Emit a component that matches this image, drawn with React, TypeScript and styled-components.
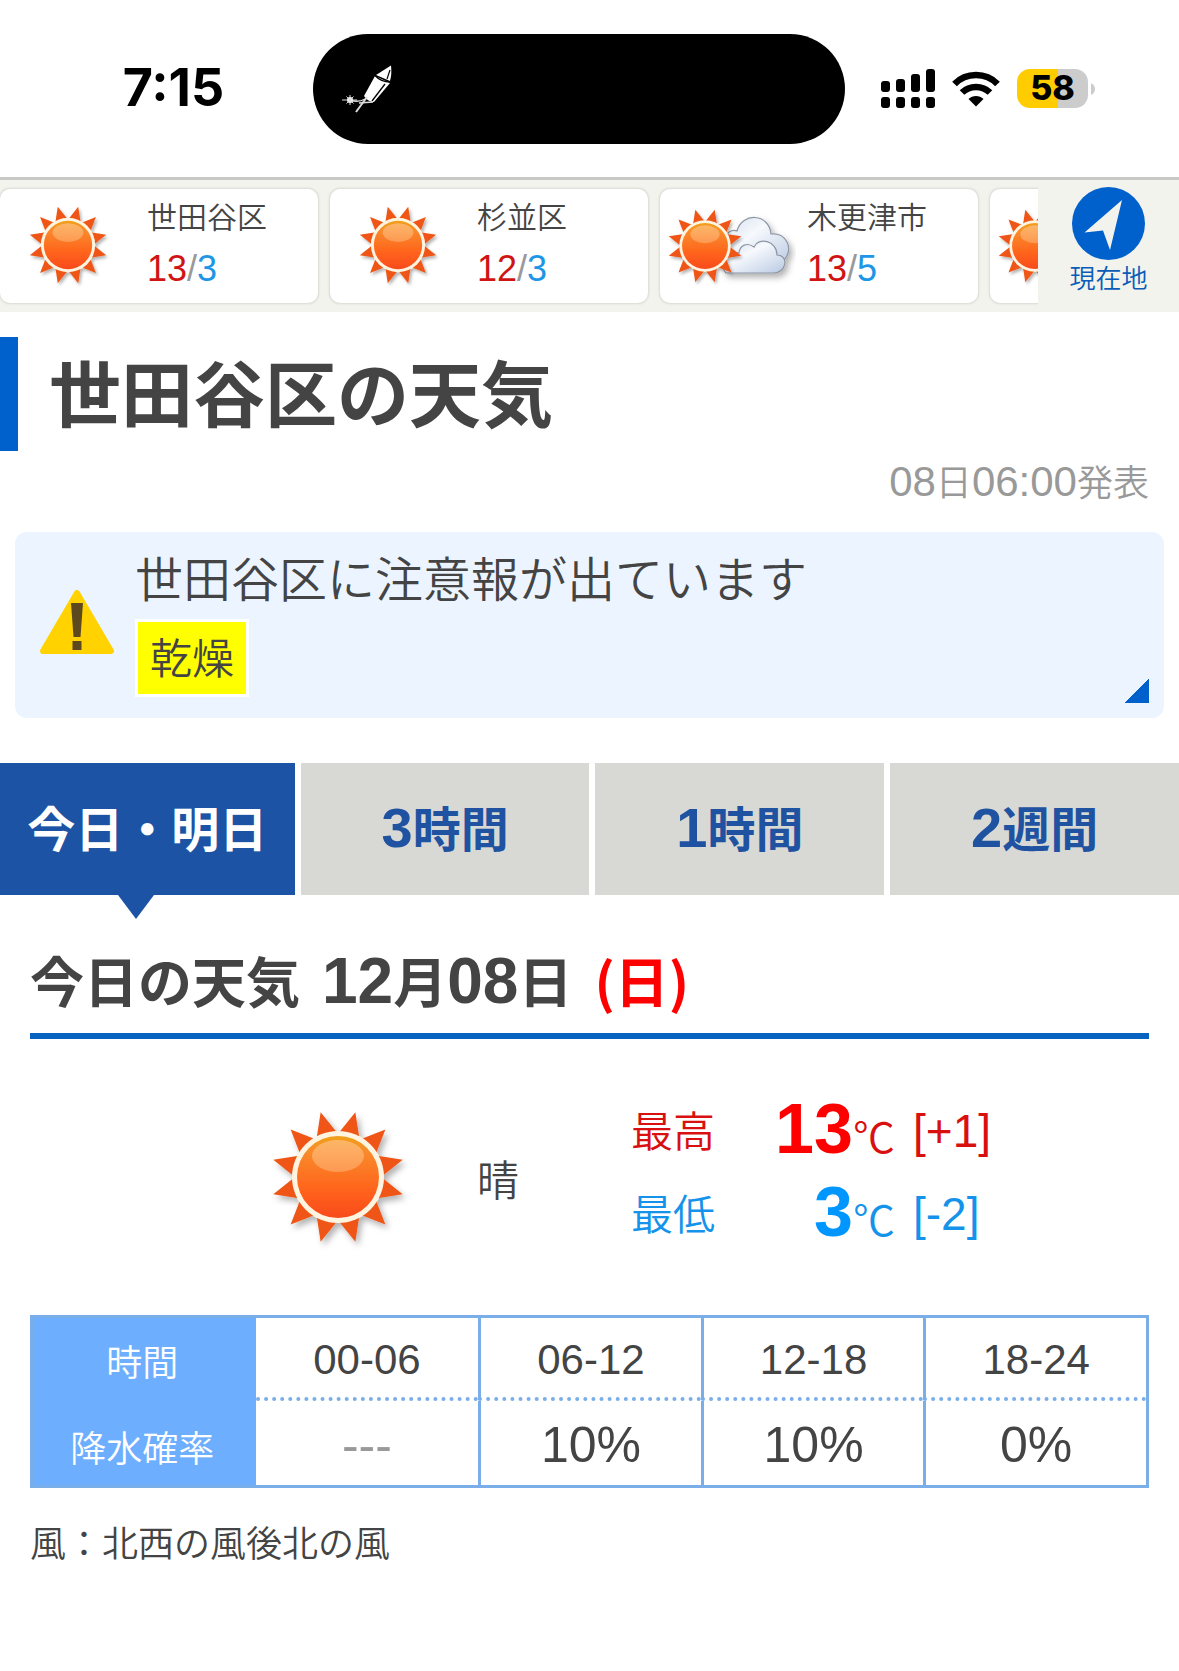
import React, { useId } from 'react';
import styled, { createGlobalStyle } from 'styled-components';

const GlobalStyle = createGlobalStyle`
  *, *::before, *::after { box-sizing: border-box; }
  body {
    margin: 0;
    background: #fff;
    color: #444;
    font-family: "Noto Sans CJK JP", sans-serif;
    font-weight: 350;
  }
  h1, h2, p, dl, dt, dd { margin: 0; }
  a { color: inherit; text-decoration: none; }
  button { font: inherit; border: 0; padding: 0; cursor: pointer; }
  svg { display: block; flex: none; }
`;

/* Latin figures run a little larger than the kana and kanji around them. */
const Num = styled.span<{ $size: number }>`
  font-family: "Liberation Sans", "Noto Sans CJK JP", sans-serif;
  font-size: ${(p) => p.$size}px;
  line-height: 1;
`;

/* ---------- status bar ---------- */

const StatusBar = styled.header`
  display: grid;
  grid-template-columns: 313fr 532px 334fr;
  align-items: center;
  height: 177px;
  color: #000;
  font-family: Inter, sans-serif;
`;

const Clock = styled.time`
  padding: 0 0 2px 34px;
  text-align: center;
  font-size: 52px;
  font-weight: 700;
`;

const Island = styled.div`
  display: flex;
  align-items: center;
  height: 110px;
  padding-left: 28px;
  border-radius: 55px;
  background: #000;
`;

const StatusIcons = styled.div`
  display: flex;
  align-items: center;
  gap: 17px;
  padding-left: 36px;
`;

const BatteryWrap = styled.div`
  display: flex;
  align-items: center;
  gap: 3px;
`;

const Battery = styled.div`
  width: 71px;
  height: 39px;
  border-radius: 13px;
  background: linear-gradient(90deg, #fc0 58%, #ccc 58%);
  text-align: center;
  font-size: 34px;
  line-height: 38px;
  font-weight: 800;
`;

const Rocket = () => (
  <svg width="54" height="50" viewBox="0 0 54 50" aria-hidden="true">
    <path d="M35 11 50 1.500Q51 10 49 17Z" fill="#fff" />
    <path d="M34 12 49 19 33 38Q27 38 23 32Z" fill="#fff" />
    <path d="M34 11.500 Q40 18 49 18" stroke="#000" strokeWidth="1.4" fill="none" />
    <path d="M44 20 31 37" stroke="#000" strokeWidth="1.3" />
    <path d="M49 6 46 15" stroke="#000" strokeWidth="1.2" />
    <path d="M15 48 26 33" stroke="#ddd" strokeWidth="2" />
    <path d="M9 36Q17 39 24 35M18 39 32 38" stroke="#ddd" strokeWidth="1.4" fill="none" />
    <circle cx="9" cy="36" r="3" fill="#fff" />
    <path d="M1 36H16M9 31V41M5.500 32.500 12.500 39.500M12.500 32.500 5.500 39.500" stroke="#ddd" strokeWidth="1" />
  </svg>
);

const Signal = () => (
  <svg width="54" height="39" viewBox="0 0 54 39" role="img" aria-label="電波">
    {[12, 10, 5, 0].map((top, i) => (
      <g key={top}>
        <rect x={i * 15} y={top} width="9" height={23 - top} rx="3" />
        <rect x={i * 15} y="28" width="9" height="11" rx="3" />
      </g>
    ))}
  </svg>
);

const Wifi = () => (
  <svg width="48" height="36" viewBox="0 0 48 36" role="img" aria-label="Wi-Fi">
    <path d="M2.500 13C14 1 34 1 45.500 13" fill="none" stroke="#000" strokeWidth="6.500" />
    <path d="M10 21.500C17.500 14 30.500 14 38 21.500" fill="none" stroke="#000" strokeWidth="6.500" />
    <path d="M24 35.500 16.500 28C20.500 24 27.500 24 31.500 28Z" />
  </svg>
);

const BatteryTip = () => (
  <svg width="4" height="12" viewBox="0 0 4 12" aria-hidden="true">
    <path d="M0 0Q4 2 4 6T0 12Z" fill="#ccc" />
  </svg>
);

/* ---------- weather drawings ---------- */

const rays = Array.from({ length: 12 }, (_, i) => i * 30 + 15);

const SunDefs = ({ id }: { id: string }) => (
  <defs>
    <linearGradient id={`${id}d`} x1="0" y1="0" x2="0" y2="1">
      <stop offset="0" stopColor="#f0a018" />
      <stop offset="0.2" stopColor="#f98a2c" />
      <stop offset="0.65" stopColor="#ff641c" />
      <stop offset="1" stopColor="#f94a1c" />
    </linearGradient>
    <linearGradient id={`${id}h`} x1="0" y1="0" x2="0" y2="1">
      <stop offset="0" stopColor="#ffc284" stopOpacity="0.7" />
      <stop offset="1" stopColor="#ffb070" stopOpacity="0.6" />
    </linearGradient>
    <linearGradient id={`${id}c`} x1="0" y1="0" x2="1" y2="1">
      <stop offset="0" stopColor="#d3dcec" />
      <stop offset="0.4" stopColor="#f6f9fd" />
      <stop offset="1" stopColor="#b9c9e2" />
    </linearGradient>
    <filter id={`${id}s`} x="-20%" y="-20%" width="150%" height="150%">
      <feDropShadow dx="3" dy="4" stdDeviation="3" floodColor="#000" floodOpacity="0.3" />
    </filter>
  </defs>
);

const SunShape = ({ id }: { id: string }) => (
  <g filter={`url(#${id}s)`}>
    {rays.map((angle) => (
      <path key={angle} d="M-11-42 0-67 11-42Z" fill="#ee5514" transform={`rotate(${angle})`} />
    ))}
    <circle r="46" fill="#fff4e0" />
    <circle r="41" fill={`url(#${id}d)`} />
    <ellipse cy="-21" rx="26" ry="16" fill={`url(#${id}h)`} />
  </g>
);

const SunLarge = () => {
  const id = useId();
  return (
    <svg width="150" height="150" viewBox="-75 -75 150 150" role="img" aria-label="晴">
      <SunDefs id={id} />
      <SunShape id={id} />
    </svg>
  );
};

const CardIcon = ({ cloudy }: { cloudy: boolean }) => {
  const id = useId();
  return (
    <svg width="136" height="112" viewBox="0 0 136 112" role="img" aria-label={cloudy ? '晴時々曇' : '晴'}>
      <SunDefs id={id} />
      {cloudy && (
        <g filter={`url(#${id}s)`} fill={`url(#${id}c)`} stroke="#8e96a3" strokeWidth="1.2">
          <path d="M64 71C56 57 66 37 77 41C82 22 109 23 111 44C127 42 134 60 124 70Q118 77 104 77H72Q66 77 64 71Z" />
          <path d="M66 83H113C127 83 129 65 117 65C117 50 98 47 94 57C87 52 80 55 79 63C66 62 58 76 66 83Z" />
        </g>
      )}
      <g transform={cloudy ? 'translate(45 56) scale(0.56)' : 'translate(68 55) scale(0.59)'}>
        <SunShape id={id} />
      </g>
    </svg>
  );
};

/* ---------- place strip ---------- */

const Strip = styled.nav`
  display: flex;
  height: 135px;
  border-top: 3px solid #c8c8c6;
  background: #f2f3ed;
`;

const Places = styled.div`
  display: flex;
  flex: 1;
  min-width: 0;
  gap: 12px;
  padding: 9px 0;
  overflow: hidden;
`;

const PlaceCard = styled.a`
  display: flex;
  flex: none;
  align-items: center;
  gap: 11px;
  width: 318px;
  border-radius: 10px;
  background: #fff;
  box-shadow: 0 0 2px 1px #d9dad5;
`;

const PlaceText = styled.span`
  display: flex;
  flex-direction: column;
  padding-bottom: 8px;
  font-size: 30px;
  line-height: 53px;
`;

const Temps = styled.span`
  color: #999;
`;

const High = styled.span`
  color: #d01414;
`;

const Low = styled.span`
  color: #1e96e6;
`;

const Locate = styled.button`
  display: flex;
  flex-direction: column;
  align-items: center;
  flex: none;
  width: 141px;
  padding-top: 7px;
  background: #f2f3ed;
  color: #0a5cb8;
  && { font-size: 26px; line-height: 34px; }
`;

/* ---------- title and warning ---------- */

const Title = styled.h1`
  margin-top: 25px;
  padding: 0 0 8px 31px;
  border-left: 18px solid #0060cc;
  font-size: 72px;
  line-height: 106px;
  font-weight: 700;
`;

const Published = styled.p`
  padding: 0 30px 4px;
  color: #999;
  text-align: right;
  font-size: 36px;
  line-height: 58px;
`;

const Alert = styled.a`
  position: relative;
  display: flex;
  align-items: center;
  gap: 20px;
  margin: 19px 15px 45px;
  padding: 15px 24px 21px;
  border-radius: 12px;
  background: #ecf5ff;

  &::after {
    content: "";
    position: absolute;
    right: 15px;
    bottom: 15px;
    width: 24px;
    height: 24px;
    background: linear-gradient(135deg, transparent 50%, #0060cc 50%);
  }
`;

const AlertText = styled.span`
  display: flex;
  flex-direction: column;
  align-items: flex-start;
  gap: 14px;
  font-size: 48px;
  line-height: 58px;
`;

const AlertTag = styled.span`
  padding: 5px 12px 9px;
  border: 3px solid #fff;
  background: #ff0;
  font-size: 42px;
`;

/* ---------- tabs ---------- */

const Tabs = styled.nav`
  display: grid;
  grid-template-columns: 295fr 289fr 289fr 289fr;
  gap: 6px;
`;

const Tab = styled.a<{ $active: boolean }>`
  position: relative;
  height: 132px;
  background: ${(p) => (p.$active ? '#1d53a5' : '#d8d9d4')};
  color: ${(p) => (p.$active ? '#fff' : '#1f53a1')};
  text-align: center;
  font-size: 48px;
  line-height: 126px;
  font-weight: 700;

  &::after {
    content: "";
    display: ${(p) => (p.$active ? 'block' : 'none')};
    position: absolute;
    top: 100%;
    left: 40%;
    border: 18px solid transparent;
    border-top: 24px solid #1d53a5;
    border-bottom: 0;
  }
`;

/* ---------- forecast ---------- */

const Forecast = styled.section`
  padding: 0 30px;
`;

const DayHeading = styled.h2`
  display: flex;
  align-items: baseline;
  gap: 22px;
  margin-top: 48px;
  padding-bottom: 16px;
  border-bottom: 6px solid #0763bf;
  font-size: 54px;
  line-height: 74px;
  font-weight: 700;
`;

const Sunday = styled.span`
  color: #f00;
`;

const Summary = styled.div`
  display: grid;
  grid-template-columns: 601fr 518fr;
  align-items: center;
  height: 276px;
  font-size: 42px;
`;

const Sky = styled.div`
  display: flex;
  align-items: center;
  justify-content: flex-end;
  gap: 64px;
  padding-right: 112px;
`;

const TempList = styled.dl`
  display: grid;
  gap: 3px;
  padding-bottom: 14px;
`;

const TempRow = styled.div<{ $tone: 'high' | 'low' }>`
  display: grid;
  grid-template-columns: 84px 180px auto;
  align-content: center;
  align-items: center;
  height: 80px;
  line-height: 72px;
  color: ${(p) => (p.$tone === 'high' ? '#d81010' : '#1593ea')};
`;

const TempValue = styled.dd`
  padding-top: 8px;
  text-align: right;
`;

const Degree = styled(Num)<{ $tone: 'high' | 'low' }>`
  color: ${(p) => (p.$tone === 'high' ? '#f00' : '#0096ff')};
  font-weight: 700;
`;

const Diff = styled.dd`
  padding-left: 18px;
`;

const RainTable = styled.table`
  width: 100%;
  table-layout: fixed;
  border: 3px solid #7aaee9;
  border-spacing: 0;
  text-align: center;
  font-size: 36px;
`;

const Label = styled.th`
  padding: 0 4px 0 0;
  background: #6eaefe;
  color: #fff;
  font-weight: 350;
`;

const Hours = styled.th`
  height: 83px;
  padding: 0;
  border-bottom: 4px dotted #7aaee9;
  font-weight: 350;

  & + & { border-left: 3px solid #7aaee9; }
`;

const Chance = styled.td<{ $empty: boolean }>`
  height: 84px;
  padding: 0;
  color: ${(p) => (p.$empty ? '#999' : '#444')};

  & + & { border-left: 3px solid #7aaee9; }
`;

const ChanceRow = styled.tr`
  & > th, & > td { padding-top: 6px; }
`;

const Wind = styled.p`
  padding: 26px 0 72px;
  font-size: 36px;
  line-height: 54px;
`;

/* ---------- data ---------- */

const places = [
  { name: '世田谷区', high: 13, low: 3, cloudy: false },
  { name: '杉並区', high: 12, low: 3, cloudy: false },
  { name: '木更津市', high: 13, low: 5, cloudy: true },
];

const tabs = [
  { count: '', label: '今日・明日' },
  { count: '3', label: '時間' },
  { count: '1', label: '時間' },
  { count: '2', label: '週間' },
];

const rain = [
  { hours: '00-06', chance: '---' },
  { hours: '06-12', chance: '10%' },
  { hours: '12-18', chance: '10%' },
  { hours: '18-24', chance: '0%' },
];

export default function App() {
  return (
    <>
      <GlobalStyle />
      <StatusBar>
        <Clock>7:15</Clock>
        <Island><Rocket /></Island>
        <StatusIcons>
          <Signal />
          <Wifi />
          <BatteryWrap>
            <Battery>58</Battery>
            <BatteryTip />
          </BatteryWrap>
        </StatusIcons>
      </StatusBar>

      <Strip>
        <Places>
          {places.map((place) => (
            <PlaceCard href="#" key={place.name}>
              <CardIcon cloudy={place.cloudy} />
              <PlaceText>
                <span>{place.name}</span>
                <Temps>
                  <Num $size={36}><High>{place.high}</High>/<Low>{place.low}</Low></Num>
                </Temps>
              </PlaceText>
            </PlaceCard>
          ))}
          <PlaceCard href="#"><CardIcon cloudy /></PlaceCard>
        </Places>
        <Locate type="button">
          <svg width="73" height="73" viewBox="0 0 73 73" aria-hidden="true">
            <circle cx="36.500" cy="36.500" r="36.500" fill="#0060cc" />
            <path d="M50 13 12.500 45.500 31 43.500 38 63Z" fill="#f2f3ed" />
          </svg>
          現在地
        </Locate>
      </Strip>

      <main>
        <Title>世田谷区の天気</Title>
        <Published>
          <Num $size={42}>08</Num>日<Num $size={42}>06:00</Num>発表
        </Published>

        <Alert href="#">
          <svg width="76" height="64" viewBox="0 0 76 64" aria-hidden="true">
            <path d="M38 3 72 61H4Z" fill="#ffd200" stroke="#ffd200" strokeWidth="6" strokeLinejoin="round" />
            <path d="M32 13H44L41.500 47H34.500ZM33.500 51H42.500V60H33.500Z" fill="#5c4a1e" />
          </svg>
          <AlertText>
            <span>世田谷区に注意報が出ています</span>
            <AlertTag>乾燥</AlertTag>
          </AlertText>
        </Alert>

        <Tabs>
          {tabs.map((tab, i) => (
            <Tab href="#" key={tab.count} $active={i === 0}>
              {tab.count && <Num $size={56}>{tab.count}</Num>}
              {tab.label}
            </Tab>
          ))}
        </Tabs>

        <Forecast>
          <DayHeading>
            <span>今日の天気</span>
            <span><Num $size={64}>12</Num>月<Num $size={64}>08</Num>日</span>
            <Sunday>(日)</Sunday>
          </DayHeading>

          <Summary>
            <Sky>
              <SunLarge />
              <span>晴</span>
            </Sky>
            <TempList>
              <TempRow $tone="high">
                <dt>最高</dt>
                <TempValue><Degree $size={70} $tone="high">13</Degree>℃</TempValue>
                <Diff><Num $size={46}>[+1]</Num></Diff>
              </TempRow>
              <TempRow $tone="low">
                <dt>最低</dt>
                <TempValue><Degree $size={70} $tone="low">3</Degree>℃</TempValue>
                <Diff><Num $size={46}>[-2]</Num></Diff>
              </TempRow>
            </TempList>
          </Summary>

          <RainTable>
            <tbody>
              <tr>
                <Label scope="row">時間</Label>
                {rain.map((slot) => (
                  <Hours scope="col" key={slot.hours}><Num $size={42}>{slot.hours}</Num></Hours>
                ))}
              </tr>
              <ChanceRow>
                <Label scope="row">降水確率</Label>
                {rain.map((slot) => (
                  <Chance key={slot.hours} $empty={slot.chance === '---'}>
                    <Num $size={50}>{slot.chance}</Num>
                  </Chance>
                ))}
              </ChanceRow>
            </tbody>
          </RainTable>

          <Wind>風：北西の風後北の風</Wind>
        </Forecast>
      </main>
    </>
  );
}
